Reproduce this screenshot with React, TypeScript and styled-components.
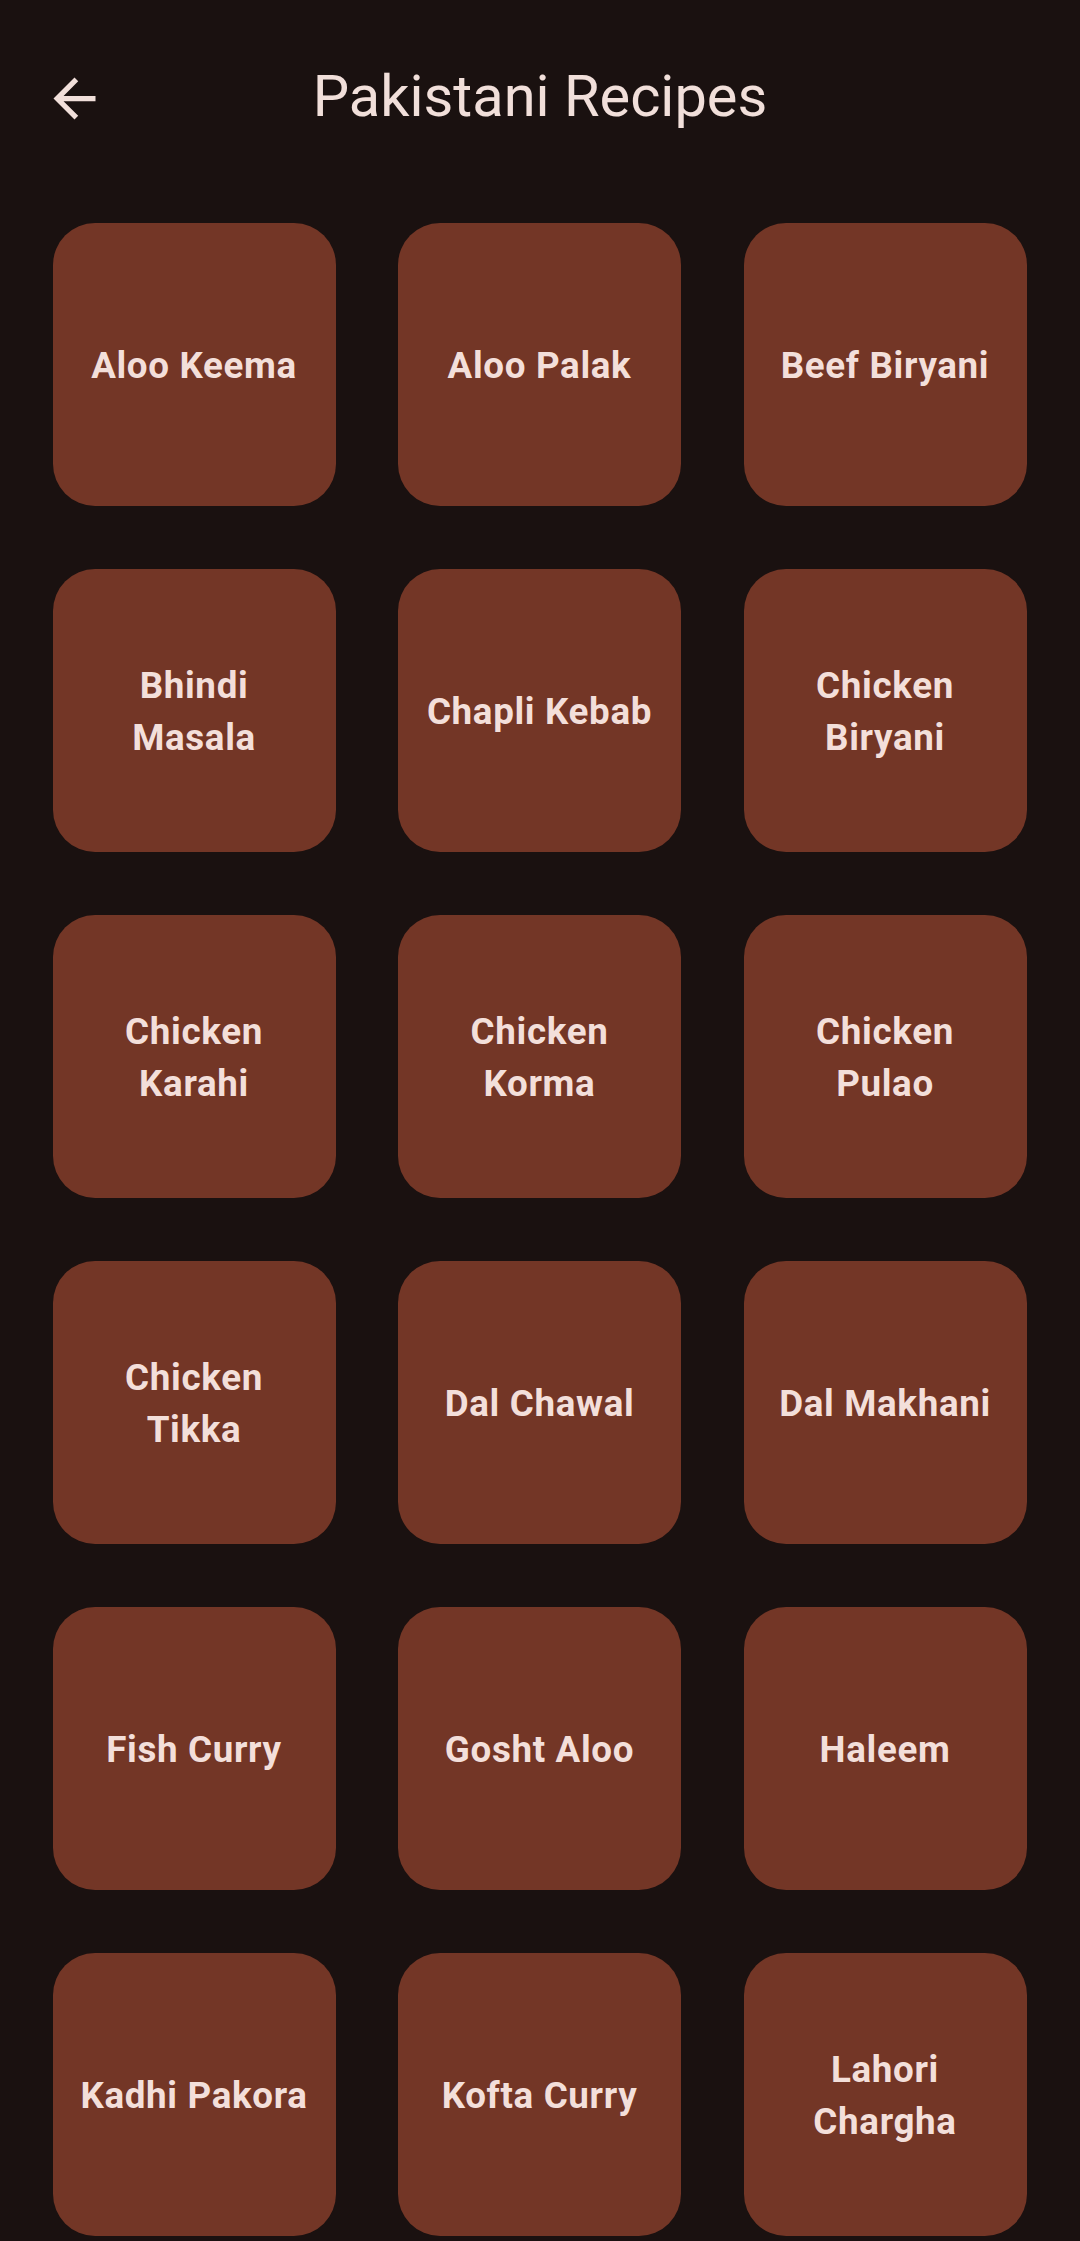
import React from "react";
import styled, { createGlobalStyle } from "styled-components";

const GlobalStyle = createGlobalStyle`
  html, body {
    margin: 0;
    padding: 0;
    background: #1a1110;
  }
  body {
    font-family: Roboto, "Noto Sans", "Liberation Sans", sans-serif;
    -webkit-font-smoothing: antialiased;
  }
`;

const Page = styled.div`
  min-height: 2241px;
  background: #1a1110;
  color: #f1dfda;
  box-sizing: border-box;
`;

const AppBar = styled.header`
  margin-top: 24.5px;
  height: 148px;
  display: flex;
  align-items: center;
  position: relative;
  box-sizing: border-box;
`;

const BackButton = styled.button`
  width: 126px;
  height: 126px;
  margin-left: 11px;
  border: none;
  background: transparent;
  padding: 0;
  display: flex;
  align-items: center;
  justify-content: center;
  color: #f1dfda;
  cursor: pointer;
  flex-shrink: 0;
`;

const Title = styled.h1`
  position: absolute;
  left: 0;
  right: 0;
  top: 0;
  bottom: 0;
  margin: 0;
  display: flex;
  align-items: center;
  justify-content: center;
  font-family: Roboto, "Noto Sans", sans-serif;
  font-weight: 400;
  font-size: 57.75px;
  line-height: 1;
  color: #f1dfda;
  pointer-events: none;
  padding-bottom: 4px;
`;

const Grid = styled.main`
  display: grid;
  grid-template-columns: repeat(3, 283px);
  grid-auto-rows: 283px;
  column-gap: 62.5px;
  row-gap: 63px;
  padding: 50.5px 52.5px 52px;
  box-sizing: border-box;
`;

const Tile = styled.div`
  background: #733626;
  border-radius: 42px;
  display: flex;
  align-items: center;
  justify-content: center;
  padding: 3px 24px 0;
  box-sizing: border-box;
  text-align: center;
  font-family: Roboto, "Noto Sans", sans-serif;
  font-weight: 700;
  font-size: 36.75px;
  letter-spacing: 0.66px;
  line-height: 52.5px;
  color: #f3dfda;
`;

const recipes = [
  "Aloo Keema",
  "Aloo Palak",
  "Beef Biryani",
  "Bhindi Masala",
  "Chapli Kebab",
  "Chicken Biryani",
  "Chicken Karahi",
  "Chicken Korma",
  "Chicken Pulao",
  "Chicken Tikka",
  "Dal Chawal",
  "Dal Makhani",
  "Fish Curry",
  "Gosht Aloo",
  "Haleem",
  "Kadhi Pakora",
  "Kofta Curry",
  "Lahori Chargha",
];

const BackIcon = () => (
  <svg width="63" height="63" viewBox="0 0 24 24" fill="currentColor">
    <path d="M20 11H7.83l5.59-5.59L12 4l-8 8 8 8 1.41-1.41L7.83 13H20v-2z" />
  </svg>
);

export default function App() {
  return (
    <Page>
      <GlobalStyle />
      <AppBar>
        <BackButton aria-label="Back">
          <BackIcon />
        </BackButton>
        <Title>Pakistani Recipes</Title>
      </AppBar>
      <Grid>
        {recipes.map((r) => (
          <Tile key={r}>{r}</Tile>
        ))}
      </Grid>
    </Page>
  );
}
